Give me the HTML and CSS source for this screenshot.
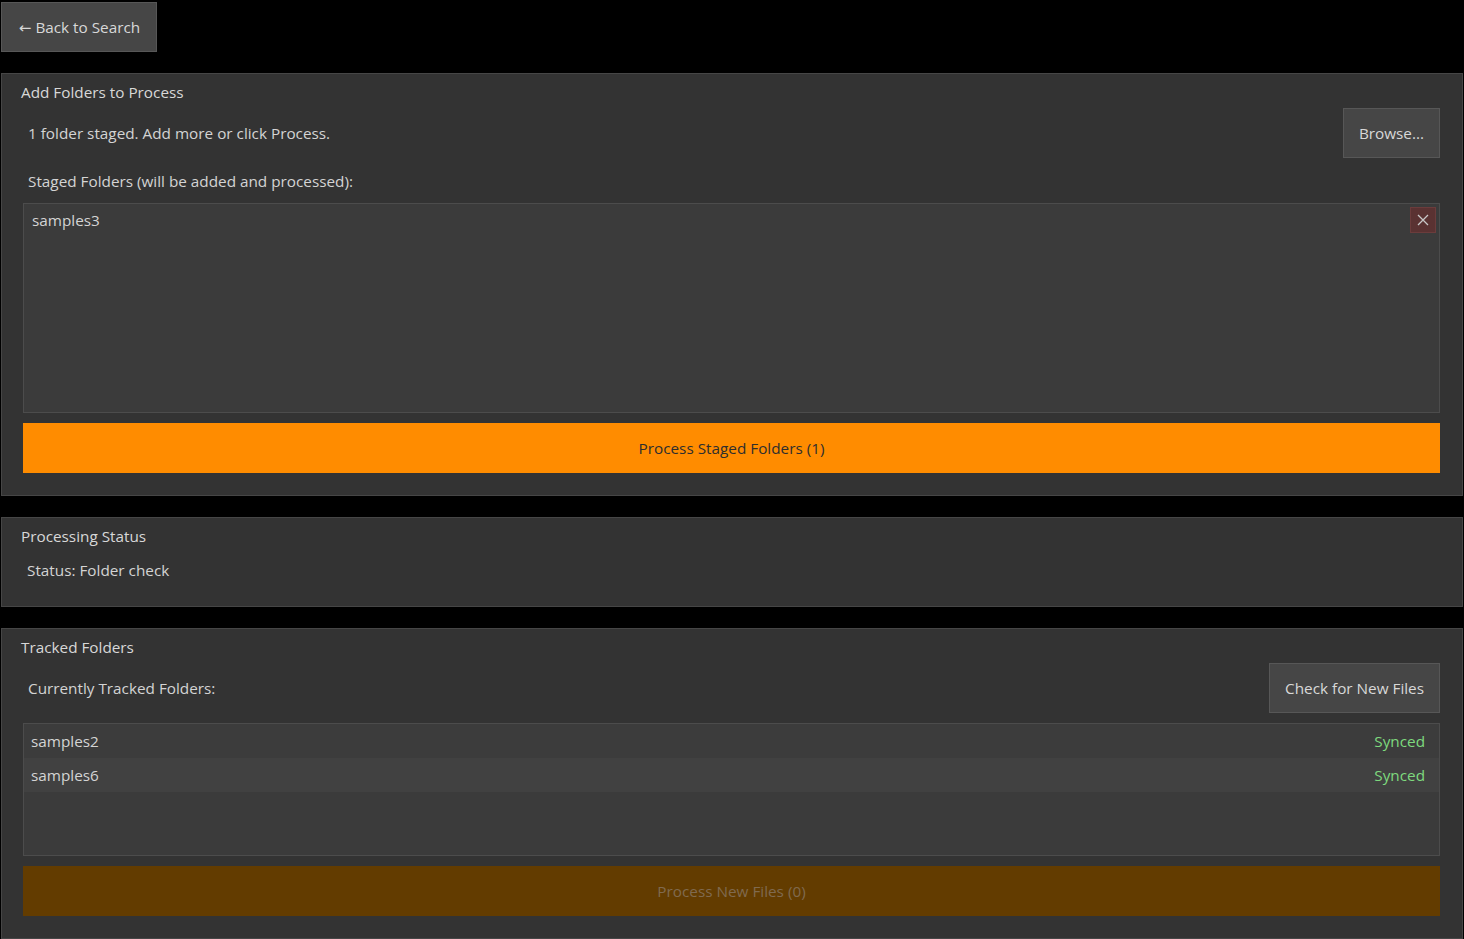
FILE: index.html
```html
<!DOCTYPE html>
<html lang="en">
<head>
  <meta charset="UTF-8" />
  <title>Folder Processing</title>
  <link rel="stylesheet" href="styles.css">
</head>
<body>
  <div class="top-bar">
    <button class="btn back-btn"><span class="arrow">←</span> Back to Search</button>
  </div>

  <section class="panel">
    <h2 class="panel-title">Add Folders to Process</h2>
    <div class="row">
      <span class="msg">1 folder staged. Add more or click Process.</span>
      <button class="btn">Browse...</button>
    </div>
    <div class="label">Staged Folders (will be added and processed):</div>
    <div class="list staged-list">
      <div class="staged-item">
        <span>samples3</span>
        <button class="remove-btn" title="Remove">
          <svg width="12" height="12" viewBox="0 0 12 12"><path d="M1 1L11 11M11 1L1 11" stroke="#c8c8c8" stroke-width="1.3" fill="none"/></svg>
        </button>
      </div>
    </div>
    <button class="action-btn">Process Staged Folders (1)</button>
  </section>

  <section class="panel status-panel">
    <h2 class="panel-title">Processing Status</h2>
    <div class="status-text">Status: Folder check</div>
  </section>

  <section class="panel">
    <h2 class="panel-title">Tracked Folders</h2>
    <div class="row">
      <span class="msg">Currently Tracked Folders:</span>
      <button class="btn">Check for New Files</button>
    </div>
    <div class="list tracked-list">
      <div class="tracked-item"><span>samples2</span><span class="synced">Synced</span></div>
      <div class="tracked-item alt"><span>samples6</span><span class="synced">Synced</span></div>
    </div>
    <button class="action-btn disabled" disabled>Process New Files (0)</button>
  </section>
</body>
</html>
```

FILE: styles.css
```css
body { margin: 0; padding: 2px 1px 0 1px; background: #000; color: #d4d4d4; font-family: "Open Sans", "Noto Sans", sans-serif; font-size: 15.3px; }
.top-bar { margin-bottom: 21px; }
.btn { font-family: inherit; font-size: 15.3px; color: #d8d8d8; background: #464646; border: 1px solid #575757; padding: 0 15px; height: 50px; cursor: pointer; }
.back-btn { width: 156px; padding: 0 0 0 1px; }
.arrow { font-family: "DejaVu Sans", sans-serif; font-size: 15px; }
.panel { background: #333333; border: 1px solid #464646; padding: 7px 22px 22px 21px; margin-bottom: 21px; }
.panel-title { font-size: 15.3px; font-weight: normal; margin: 0 0 5px -2px; line-height: 22px; color: #d8d8d8; }
.row { display: flex; justify-content: space-between; align-items: center; }
.msg { padding-left: 5px; }
.label { padding-left: 5px; line-height: 20px; margin: 13px 0 12px; }
.list { background: #3b3b3b; border: 1px solid #4c4c4c; }
.staged-list { height: 208px; }
.staged-item { display: flex; justify-content: space-between; align-items: center; padding: 3px 3px 0 8px; }
.remove-btn { width: 26px; height: 26px; padding: 0; background: #5a3232; border: 1px solid #6b3c3c; display: flex; align-items: center; justify-content: center; cursor: pointer; }
.action-btn { display: block; width: 100%; height: 50px; margin-top: 10px; border: none; background: #ff8c00; color: #2e2e2e; font-family: inherit; font-size: 15.3px; cursor: pointer; }
.action-btn.disabled { background: #633c00; color: #806a4f; cursor: default; }
.status-panel { padding-bottom: 26px; }
.status-text { padding-left: 4px; line-height: 20px; margin-top: 13px; }
.tracked-list { height: 131px; margin-top: 10px; }
.tracked-item { display: flex; justify-content: space-between; height: 34px; align-items: center; padding: 0 14px 0 7px; background: #3c3c3c; }
.tracked-item.alt { background: #414141; }
.synced { color: #7ed97e; }
```
